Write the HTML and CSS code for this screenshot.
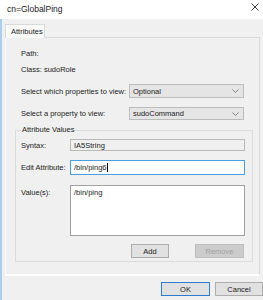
FILE: index.html
```html
<!DOCTYPE html>
<html>
<head>
<meta charset="utf-8">
<link rel="stylesheet" href="styles.css">
</head>
<body>
<div class="window">
  <div class="titlebar">
    <span class="title">cn=GlobalPing</span>
    <svg class="close" width="8" height="8" viewBox="0 0 8 8"><path d="M0.5 0.5 L7.5 7.5 M7.5 0.5 L0.5 7.5" stroke="#222" stroke-width="0.9" fill="none"/></svg>
  </div>
  <div class="client">
    <div class="tabstrip"><div class="tab">Attributes</div></div>
    <div class="pane">
      <div class="info">Path:</div>
      <div class="info">Class: sudoRole</div>
      <div class="row first">
        <span class="lbl">Select which properties to view:</span>
        <div class="select"><span>Optional</span><svg width="7" height="4" viewBox="0 0 7 4"><path d="M0.5 0.5 L3.5 3.5 L6.5 0.5" stroke="#777" stroke-width="0.9" fill="none"/></svg></div>
      </div>
      <div class="row second">
        <span class="lbl">Select a property to view:</span>
        <div class="select"><span>sudoCommand</span><svg width="7" height="4" viewBox="0 0 7 4"><path d="M0.5 0.5 L3.5 3.5 L6.5 0.5" stroke="#777" stroke-width="0.9" fill="none"/></svg></div>
      </div>
      <fieldset class="group">
        <legend>Attribute Values</legend>
        <div class="frow syntax"><span class="lbl">Syntax:</span><div class="field ro">IA5String</div></div>
        <div class="frow edit"><span class="lbl">Edit Attribute:</span><div class="field focus">/bin/ping6<span class="caret"></span></div></div>
        <div class="frow values"><span class="lbl">Value(s):</span><div class="listbox">/bin/ping</div></div>
        <div class="btnrow">
          <button class="btn add">Add</button>
          <button class="btn remove" disabled>Remove</button>
        </div>
      </fieldset>
    </div>
    <div class="footer">
      <button class="btn ok">OK</button>
      <button class="btn cancel">Cancel</button>
    </div>
  </div>
</div>
</body>
</html>
```

FILE: styles.css
```css
* { box-sizing: border-box; }
html, body { margin: 0; padding: 0; }
body {
  width: 263px;
  height: 300px;
  overflow: hidden;
  background: #f0f0f0;
  font-family: "Liberation Sans", Arial, sans-serif;
  font-size: 7.5px;
  color: #1b1b1b;
}
.window { width: 263px; height: 300px; display: flex; flex-direction: column; }
.titlebar {
  height: 19px;
  background: #fff;
  display: flex;
  align-items: center;
  justify-content: space-between;
  padding: 0 4px 2px 7px;
  font-size: 8.5px;
}
.close { margin-top: -4px; }
.client {
  flex: 1;
  border-left: 2px solid #a9cef0;
  display: flex;
  flex-direction: column;
}
.tabstrip { padding: 5px 0 0 3px; height: 18px; display: flex; }
.tab {
  width: 40px;
  height: 14px;
  background: #fafafa;
  border: 1px solid #d9d9d9;
  border-bottom: none;
  padding: 2px 0 0 5px;
  line-height: 9px;
  position: relative;
  z-index: 1;
}
.pane {
  margin: 0 3px 0 3px;
  height: 239px;
  border: 1px solid #d9d9d9;
  border-bottom: 2px solid #fff;
  border-left-color: #fff;
  padding: 11px 15px 0 15px;
}
.info { line-height: 10px; height: 16px; }
.row {
  display: flex;
  align-items: center;
  justify-content: space-between;
  height: 14px;
}
.row.first { margin-top: 3px; }
.row.second { margin-top: 9px; height: 13px; }
.select {
  width: 115px;
  height: 100%;
  border: 1px solid #bcbcbc;
  background: #e5e5e5;
  display: flex;
  align-items: center;
  justify-content: space-between;
  padding: 0 4px 0 3px;
}
.group {
  margin: 6px -8px 0 -6px;
  width: 238px;
  height: 136px;
  border: 1px solid #dcdcdc;
  padding: 5px 7px 0 5px;
}
.group legend { padding: 0 1px; margin-left: 0; line-height: 8px; }
.frow { display: flex; }
.frow .lbl { width: 49px; }
.field {
  flex: 1;
  border: 1px solid #adadad;
  padding: 0 3px;
  display: flex;
  align-items: center;
}
.field.ro { height: 12px; background: #f0f0f0; border-color: #b9b9b9; }
.syntax { align-items: center; }
.edit { margin-top: 9px; align-items: center; }
.field.focus { height: 15px; background: #fff; border-color: #4a9ee0; }
.caret { display: inline-block; width: 1px; height: 9px; background: #000; margin-left: 0; }
.values { margin-top: 10px; }
.values .lbl { padding-top: 3px; }
.listbox {
  flex: 1;
  height: 51px;
  background: #fff;
  border: 1px solid #a0a0a0;
  padding: 2px 3px;
}
.btnrow { display: flex; justify-content: flex-end; gap: 26px; margin-top: 8px; padding-right: 1px; }
.btn {
  font-family: inherit;
  font-size: 7.5px;
  height: 14px;
  padding: 0;
  background: #e1e1e1;
  border: 1px solid #adadad;
  color: #1b1b1b;
}
.add { width: 38px; }
.remove { width: 49px; color: #a0a0a0; background: #cccccc; border-color: #bfbfbf; }
.footer { display: flex; justify-content: flex-end; gap: 5px; padding: 6px 0 0 0; }
.ok { width: 49px; border-color: #2d7cd3; }
.cancel { width: 48px; margin-right: 0; }
```
